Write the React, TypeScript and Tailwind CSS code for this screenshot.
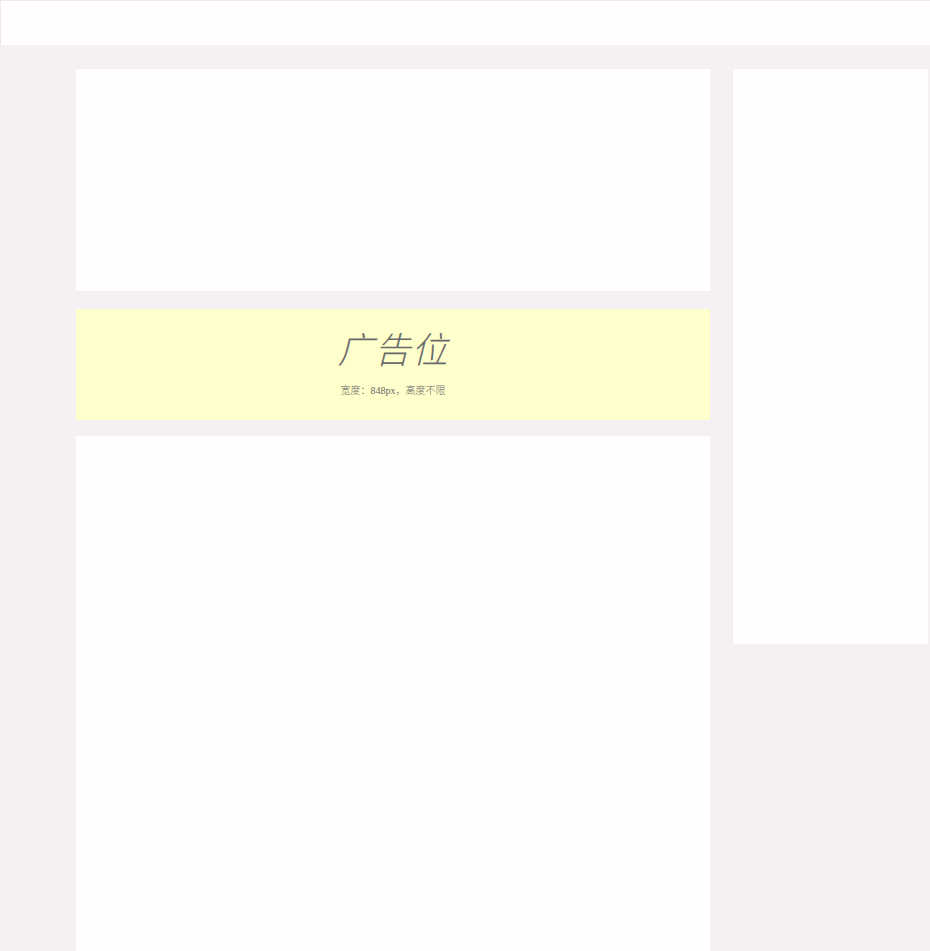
import React from 'react';

const App: React.FC = () => {
  return (
    <div className="h-screen bg-[#f4f0f4] overflow-hidden">
      {/* Header */}
      <div className="h-[45px] bg-[#fffdfe] border-t border-l border-[#ece8ec]" />

      {/* Main */}
      <div className="flex items-start pt-[24px] pl-[76px] gap-[23px]">
        {/* Left column */}
        <div className="w-[634px] shrink-0 flex flex-col">
          <div className="h-[222px] bg-[#fffdfe]" />

          <div className="mt-[18px] h-[111px] bg-[#ffffcc] flex flex-col items-center pt-[20px]">
            <div
              className="text-[36px] leading-[44px] italic font-light text-[#6b6b6b] tracking-[1px]"
              style={{ fontFamily: '"Liberation Serif", "Noto Sans CJK SC", serif' }}
            >
              广告位
            </div>
            <div
              className="mt-[12px] text-[10px] leading-[12px] font-light text-[#666]"
              style={{ fontFamily: '"Liberation Serif", "Noto Sans CJK SC", serif' }}
            >
              宽度：848px，高度不限
            </div>
          </div>

          <div className="mt-[16px] h-[515px] bg-[#fffdfe]" />
        </div>

        {/* Right column */}
        <div className="w-[195px] shrink-0 h-[575px] bg-[#fffdfe]" />
      </div>
    </div>
  );
};

export default App;
